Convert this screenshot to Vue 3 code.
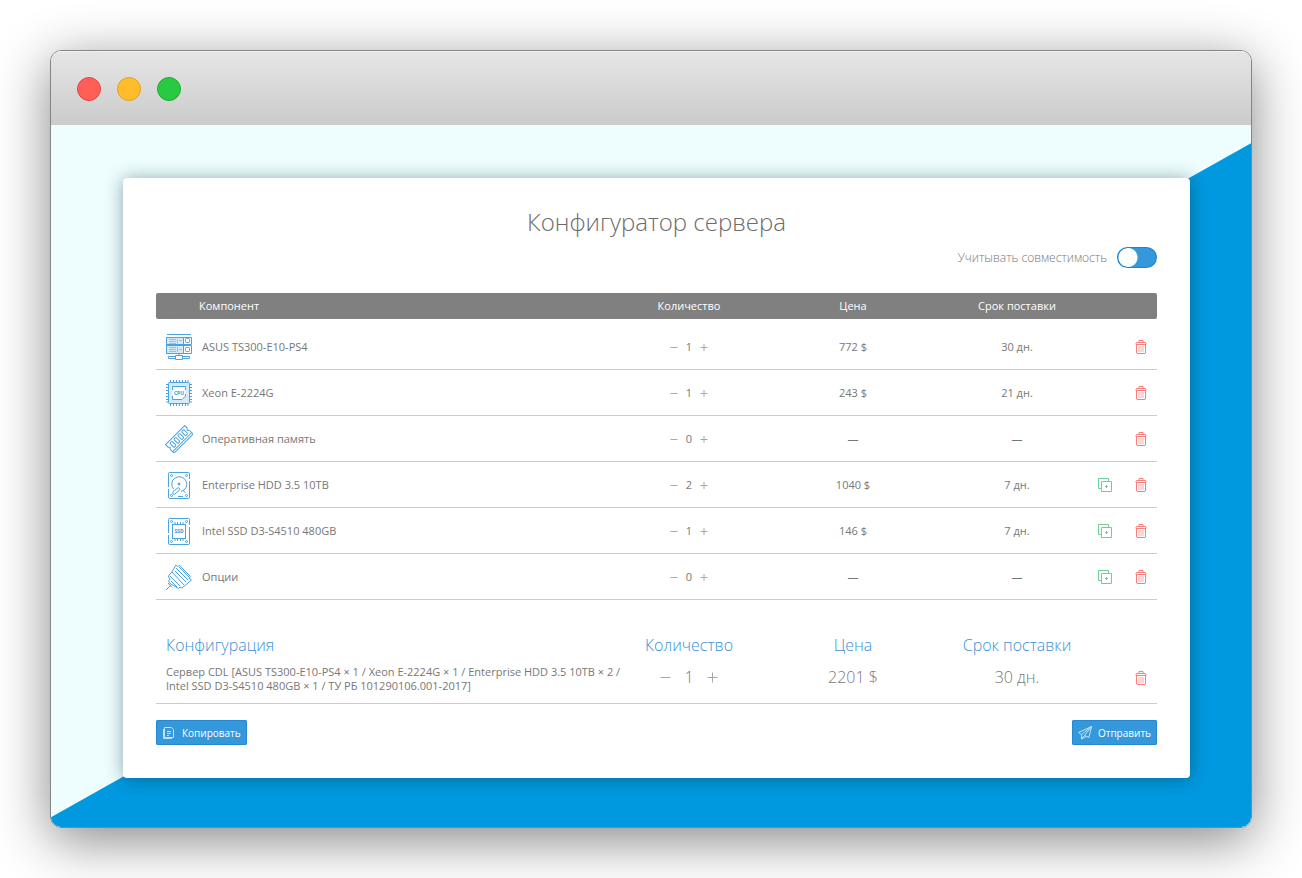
<script setup>
import { ref, reactive } from 'vue'

const compat = ref(false)
const rows = reactive([
  { icon: 'server', name: 'ASUS TS300-E10-PS4', qty: 1, price: '772 $', term: '30 дн.', copy: false },
  { icon: 'cpu', name: 'Xeon E-2224G', qty: 1, price: '243 $', term: '21 дн.', copy: false },
  { icon: 'ram', name: 'Оперативная память', qty: 0, price: '—', term: '—', copy: false },
  { icon: 'hdd', name: 'Enterprise HDD 3.5 10TB', qty: 2, price: '1040 $', term: '7 дн.', copy: true },
  { icon: 'ssd', name: 'Intel SSD D3-S4510 480GB', qty: 1, price: '146 $', term: '7 дн.', copy: true },
  { icon: 'options', name: 'Опции', qty: 0, price: '—', term: '—', copy: true },
])
const total = ref(1)
</script>

<template>
  <div class="page">
    <div class="window">
      <div class="titlebar">
        <span class="dot red"></span>
        <span class="dot yellow"></span>
        <span class="dot green"></span>
      </div>
      <div class="desk">
        <main class="card">
          <h1>Конфигуратор сервера</h1>
          <div class="compat">
            <label for="compat">Учитывать совместимость</label>
            <input id="compat" v-model="compat" type="checkbox" class="toggle" />
          </div>

          <table class="parts">
            <thead>
              <tr>
                <th class="name">Компонент</th>
                <th class="val">Количество</th>
                <th class="val">Цена</th>
                <th class="val">Срок поставки</th>
                <th class="act"></th>
              </tr>
            </thead>
            <tbody>
              <tr v-for="row in rows" :key="row.icon">
                <td>
                  <div class="part">
                    <svg class="part-icon" viewBox="0 0 28 28" aria-hidden="true">
                      <g v-if="row.icon === 'server'">
                        <path class="wash" d="M1.500 4.500H18.500V11.500H1.500ZM1.500 12.500H18.500V20.500H1.500Z" />
                        <path d="M2 1.5H26M1.500 4.500H26.500V11.500H1.500ZM1.500 12.500H26.500V20.500H1.500ZM18.500 4.500V20.500" />
                        <path class="thin" d="M4 6.500H11M4 8.500H11M4 10.500H11M4 14.500H11M4 16.500H11M4 18.500H11M12.500 6V10.500M12.500 14V19M14 7.500H17M14 16.500H17" />
                        <rect x="20.500" y="5.500" width="4" height="4" rx="1" />
                        <rect x="20.500" y="14.500" width="4" height="4" rx="1" />
                        <path d="M14 21V23M10.500 22.500H17.500V26.500H10.500ZM10.500 23.500H3.500V25.500H10.500M17.500 23.500H24.500V25.500H17.500" />
                      </g>
                      <g v-else-if="row.icon === 'cpu'">
                        <rect class="wash" x="3.500" y="3.500" width="21" height="21" rx="1" />
                        <path d="M5.500 1V3M8.500 1V3M11.500 1V3M14.500 1V3M17.500 1V3M20.500 1V3M23 1V3M5.500 25V27M8.500 25V27M11.500 25V27M14.500 25V27M17.500 25V27M20.500 25V27M23 25V27M1 5.500H3M1 8.500H3M1 11.500H3M1 14.500H3M1 17.500H3M1 20.500H3M1 23H3M25 5.500H27M25 8.500H27M25 11.500H27M25 14.500H27M25 17.500H27M25 20.500H27M25 23H27" />
                        <path class="plate" d="M7.500 7.500H20.500V17L17 20.500H7.500Z" />
                        <path d="M7.500 11V7.500H20.500V11M7.500 17V20.500H17L20.500 17V15" />
                        <text x="14" y="16">CPU</text>
                      </g>
                      <g v-else-if="row.icon === 'ram'" transform="rotate(-45 14 14)">
                        <path d="M0.500 8.500H27.500V12L26 13.500L27.500 15V20.500H0.500V15L2 13.500L0.500 12ZM1 18.500H27" />
                        <rect x="4.500" y="10.500" width="3" height="6" rx="1" />
                        <rect x="10" y="10.500" width="3" height="6" rx="1" />
                        <rect x="15.500" y="10.500" width="3" height="6" rx="1" />
                        <rect x="21" y="10.500" width="3" height="6" rx="1" />
                      </g>
                      <g v-else-if="row.icon === 'hdd'">
                        <path d="M3.500 16V2.500Q3.500 1.500 4.500 1.500H23.500Q24.500 1.500 24.500 2.500V8M24.500 10V26Q24.500 27.500 23.500 27.500H4.500Q3.500 27.500 3.500 26V18" />
                        <circle cx="6.500" cy="4.500" r="1" /><circle cx="21.500" cy="4.500" r="1" />
                        <circle cx="6.500" cy="24.500" r="1" /><circle cx="21.500" cy="24.500" r="1" />
                        <path d="M8.500 18A7.500 7.500 0 1 1 16 20.500M8 20.500L13.500 16.500L15 18.500L9.500 23.500Q7 23.500 8 20.500M13 25.500H18M18 19L20.500 22" />
                        <circle class="solid" cx="14" cy="13" r="1" />
                      </g>
                      <g v-else-if="row.icon === 'ssd'">
                        <path d="M3.500 16V2.500Q3.500 1.500 4.500 1.500H23.500Q24.500 1.500 24.500 2.500V8M24.500 10V26Q24.500 27.500 23.500 27.500H4.500Q3.500 27.500 3.500 26V18" />
                        <circle cx="6.500" cy="4.500" r="1" /><circle cx="21.500" cy="4.500" r="1" />
                        <circle cx="6.500" cy="24.500" r="1" /><circle cx="21.500" cy="24.500" r="1" />
                        <rect x="7.500" y="7.500" width="13" height="14" />
                        <path d="M10 5V7M12.500 5V7M15.500 5V7M18 5V7M10 22V24M12.500 22V24M15.500 22V24M18 22V24" />
                        <text x="14" y="16">SSD</text>
                      </g>
                      <g v-else>
                        <path d="M1 27L6 22M3 20L7 24.500M4 12L6 10L7.500 8L11 2L12.500 3.500L14.500 2.500L25.500 13.500L24 15L26.500 17L17 25L15 24L13.500 25.500L5 20.500L3.500 18L5 16L3.500 14Z" />
                        <path d="M7 9L19 22M10 8L21 19M11 5L23 17M5 13L15 23M14 4L24 14M6 18L12 24" />
                      </g>
                    </svg>
                    <span>{{ row.name }}</span>
                  </div>
                </td>
                <td class="val">
                  <div class="stepper">
                    <button type="button" aria-label="Уменьшить" @click="row.qty = Math.max(0, row.qty - 1)">
                      <svg viewBox="0 0 8 8"><path d="M0.500 4.500H7.500" /></svg>
                    </button>
                    <span>{{ row.qty }}</span>
                    <button type="button" aria-label="Увеличить" @click="row.qty++">
                      <svg viewBox="0 0 8 8"><path d="M0.500 4.500H7.500M4 1V8" /></svg>
                    </button>
                  </div>
                </td>
                <td class="val">{{ row.price }}</td>
                <td class="val">{{ row.term }}</td>
                <td>
                  <div class="actions">
                    <button v-if="row.copy" type="button" class="dup" aria-label="Дублировать">
                      <svg viewBox="0 0 14 14"><path d="M3 10.500H0.500V0.500H10.500V3M3.500 3.500H13.500V13.500H3.500ZM7 8.500H10M8.500 7V10" /></svg>
                    </button>
                    <button type="button" class="del" aria-label="Удалить">
                      <svg viewBox="0 0 12 14"><path d="M4 2V0.500H8V2M1 4.500V3L2 2.500H10L11 3V4.500ZM1.500 5V13L2 13.500H10L10.500 13V5" /><path class="bars" d="M4 6V12M6 6V12M8 6V12" /></svg>
                    </button>
                  </div>
                </td>
              </tr>
            </tbody>
          </table>

          <table class="summary">
            <thead>
              <tr>
                <th class="name">Конфигурация</th>
                <th class="val">Количество</th>
                <th class="val">Цена</th>
                <th class="val">Срок поставки</th>
                <th class="act"></th>
              </tr>
            </thead>
            <tbody>
              <tr>
                <td class="desc">
                  Сервер CDL [ASUS TS300-E10-PS4 × 1 / Xeon E-2224G × 1 / Enterprise HDD 3.5 10TB × 2 /<br />
                  Intel SSD D3-S4510 480GB × 1 / ТУ РБ 101290106.001-2017]
                </td>
                <td class="val">
                  <div class="stepper large">
                    <button type="button" aria-label="Уменьшить" @click="total = Math.max(0, total - 1)">
                      <svg viewBox="0 0 11 11"><path d="M0.500 5.500H10.500" /></svg>
                    </button>
                    <span>{{ total }}</span>
                    <button type="button" aria-label="Увеличить" @click="total++">
                      <svg viewBox="0 0 11 11"><path d="M0.500 5.500H10.500M5.500 0.500V10.500" /></svg>
                    </button>
                  </div>
                </td>
                <td class="val">2201 $</td>
                <td class="val">30 дн.</td>
                <td>
                  <div class="actions">
                    <button type="button" class="del" aria-label="Удалить">
                      <svg viewBox="0 0 12 14"><path d="M4 2V0.500H8V2M1 4.500V3L2 2.500H10L11 3V4.500ZM1.500 5V13L2 13.500H10L10.500 13V5" /><path class="bars" d="M4 6V12M6 6V12M8 6V12" /></svg>
                    </button>
                  </div>
                </td>
              </tr>
            </tbody>
          </table>

          <div class="footer">
            <button type="button" class="btn">
              <svg viewBox="0 0 14 14" aria-hidden="true"><path d="M2.500 1.500H9.500L11.500 3.500V11.500H2.500ZM5 5.500H9M5 7.500H9M5 9.500H7M1.500 3V12.500H10" /></svg>
              Копировать
            </button>
            <button type="button" class="btn">
              <svg viewBox="0 0 14 14" aria-hidden="true"><path d="M13.500 0.500L0.500 6.500L3.500 8.500L13.500 0.500L11 11.500L6.500 9.500L13.500 0.500M3.500 8.500V13L6.500 9.500M3.500 13L8 10.500" /></svg>
              Отправить
            </button>
          </div>
        </main>
      </div>
    </div>
  </div>
</template>

<style>
body {
  margin: 0;
  background: #fff;
}
</style>

<style scoped>
.page {
  box-sizing: border-box;
  min-height: 100vh;
  padding: 50px;
  overflow: hidden;
  font-family: "Open Sans", "Noto Sans", sans-serif;
  font-size: 11px;
  color: #777;
}
.window {
  border: 1px solid #858585;
  border-radius: 11px;
  overflow: hidden;
  box-shadow: 0 12px 54px rgba(0, 0, 0, 0.48);
}
.titlebar {
  display: flex;
  align-items: center;
  gap: 16px;
  height: 74px;
  padding: 2px 26px 0;
  box-sizing: border-box;
  background: linear-gradient(#e6e6e6, #cbcbcb);
  box-shadow: inset 0 1px 0 #f2f2f2;
}
.dot {
  box-sizing: border-box;
  width: 24px;
  height: 24px;
  border-radius: 50%;
}
.red { background: #ff5f57; border: 1px solid #e2453f; }
.yellow { background: #ffbd2e; border: 1px solid #dfa023; }
.green { background: #27ca40; border: 1px solid #1dad2b; }
.desk {
  position: relative;
  padding: 53px 61px 49px 72px;
  background: #eefeff;
}
.desk::before {
  content: "";
  position: absolute;
  inset: 0;
  background: #0099e0;
  clip-path: polygon(0 98.6%, 100% 2.6%, 100% 100%, 0 100%);
}
.card {
  position: relative;
  padding: 27px 33px 33px;
  background: #fff;
  border-radius: 4px;
  box-shadow: 0 1px 18px rgba(0, 40, 50, 0.42);
}
h1 {
  margin: 0;
  text-align: center;
  font-size: 24px;
  line-height: 34px;
  font-weight: 300;
  color: #6c6c6c;
}
.compat {
  display: flex;
  align-items: center;
  justify-content: flex-end;
  gap: 10px;
  margin-top: 8px;
  font-size: 12px;
  line-height: 21px;
  font-weight: 300;
  color: #777;
}
.toggle {
  appearance: none;
  width: 40px;
  height: 21px;
  margin: 0;
  border-radius: 11px;
  background: radial-gradient(circle at 11px 50%, #fff 9px, transparent 10px), #3498db;
  box-shadow: inset 0 0 0 1px #2083cf;
}
.toggle:checked {
  background: radial-gradient(circle at 29px 50%, #fff 9px, transparent 10px), #3498db;
}
table {
  width: 100%;
  table-layout: fixed;
  border-collapse: separate;
  border-spacing: 0;
}
th, td {
  padding: 0;
  text-align: left;
}
th.val, td.val {
  width: 164px;
  text-align: center;
}
.act {
  width: 58px;
}
.parts {
  margin-top: 25px;
}
.parts th {
  height: 24px;
  padding-bottom: 2px;
  background: #808080;
  color: #fff;
  font-weight: 400;
  line-height: 15px;
}
.parts th.name {
  padding-left: 43px;
}
.parts th:first-child { border-radius: 2px 0 0 2px; }
.parts th:last-child { border-radius: 0 2px 2px 0; }
.parts tbody::before {
  content: "";
  display: table-row;
  height: 5px;
}
.parts td {
  height: 45px;
  border-bottom: 1px solid #ccc;
}
.part {
  display: flex;
  align-items: center;
  gap: 9px;
  padding-left: 9px;
}
.part-icon {
  width: 28px;
  height: 28px;
}
svg {
  display: block;
  fill: none;
  stroke-width: 1;
}
.part-icon {
  stroke: #4aa3df;
}
.part-icon .thin { stroke: #8cc5ec; }
.part-icon .wash { fill: #d6ebf9; }
.part-icon .plate { fill: #fff; stroke: none; }
.part-icon .solid { fill: #4aa3df; }
.part-icon text {
  font-size: 5px;
  font-weight: 700;
  text-anchor: middle;
  fill: #3498db;
  stroke: none;
}
button {
  padding: 0;
  border: 0;
  background: none;
  font: inherit;
  color: inherit;
}
.stepper {
  display: flex;
  justify-content: center;
  align-items: center;
  gap: 8px;
}
.stepper svg {
  width: 8px;
  height: 8px;
  stroke: #a8a8a8;
}
.stepper.large {
  gap: 13px;
}
.stepper.large svg {
  width: 11px;
  height: 11px;
}
.actions {
  display: flex;
  justify-content: flex-end;
  align-items: center;
  gap: 23px;
  padding-right: 10px;
}
.dup svg { width: 14px; height: 14px; stroke: #6fce9a; }
.del svg { width: 12px; height: 14px; stroke: #fa7d7a; }
.del .bars { stroke: #fcaaa8; }
.summary {
  margin-top: 31px;
}
.summary th {
  height: 28px;
  font-size: 16px;
  font-weight: 300;
  line-height: 22px;
  color: #3a92d6;
}
.summary .name,
.summary .desc {
  padding-left: 10px;
}
.summary td {
  height: 36px;
  border-bottom: 1px solid #ccc;
  padding-bottom: 6px;
}
.summary td.desc {
  padding-bottom: 4px;
  line-height: 14px;
  white-space: nowrap;
}
.summary td.val {
  padding-bottom: 8px;
  font-size: 16px;
  font-weight: 300;
  line-height: 22px;
}
.footer {
  display: flex;
  justify-content: space-between;
  margin-top: 16px;
}
.btn {
  display: flex;
  align-items: center;
  gap: 6px;
  height: 25px;
  padding: 0 6px;
  border-radius: 2px;
  background: #3498db;
  box-shadow: inset 0 0 0 1px #2488d2;
  color: #fff;
  font-size: 10px;
}
.btn svg {
  width: 14px;
  height: 14px;
  stroke: #c4e1f6;
}
</style>
